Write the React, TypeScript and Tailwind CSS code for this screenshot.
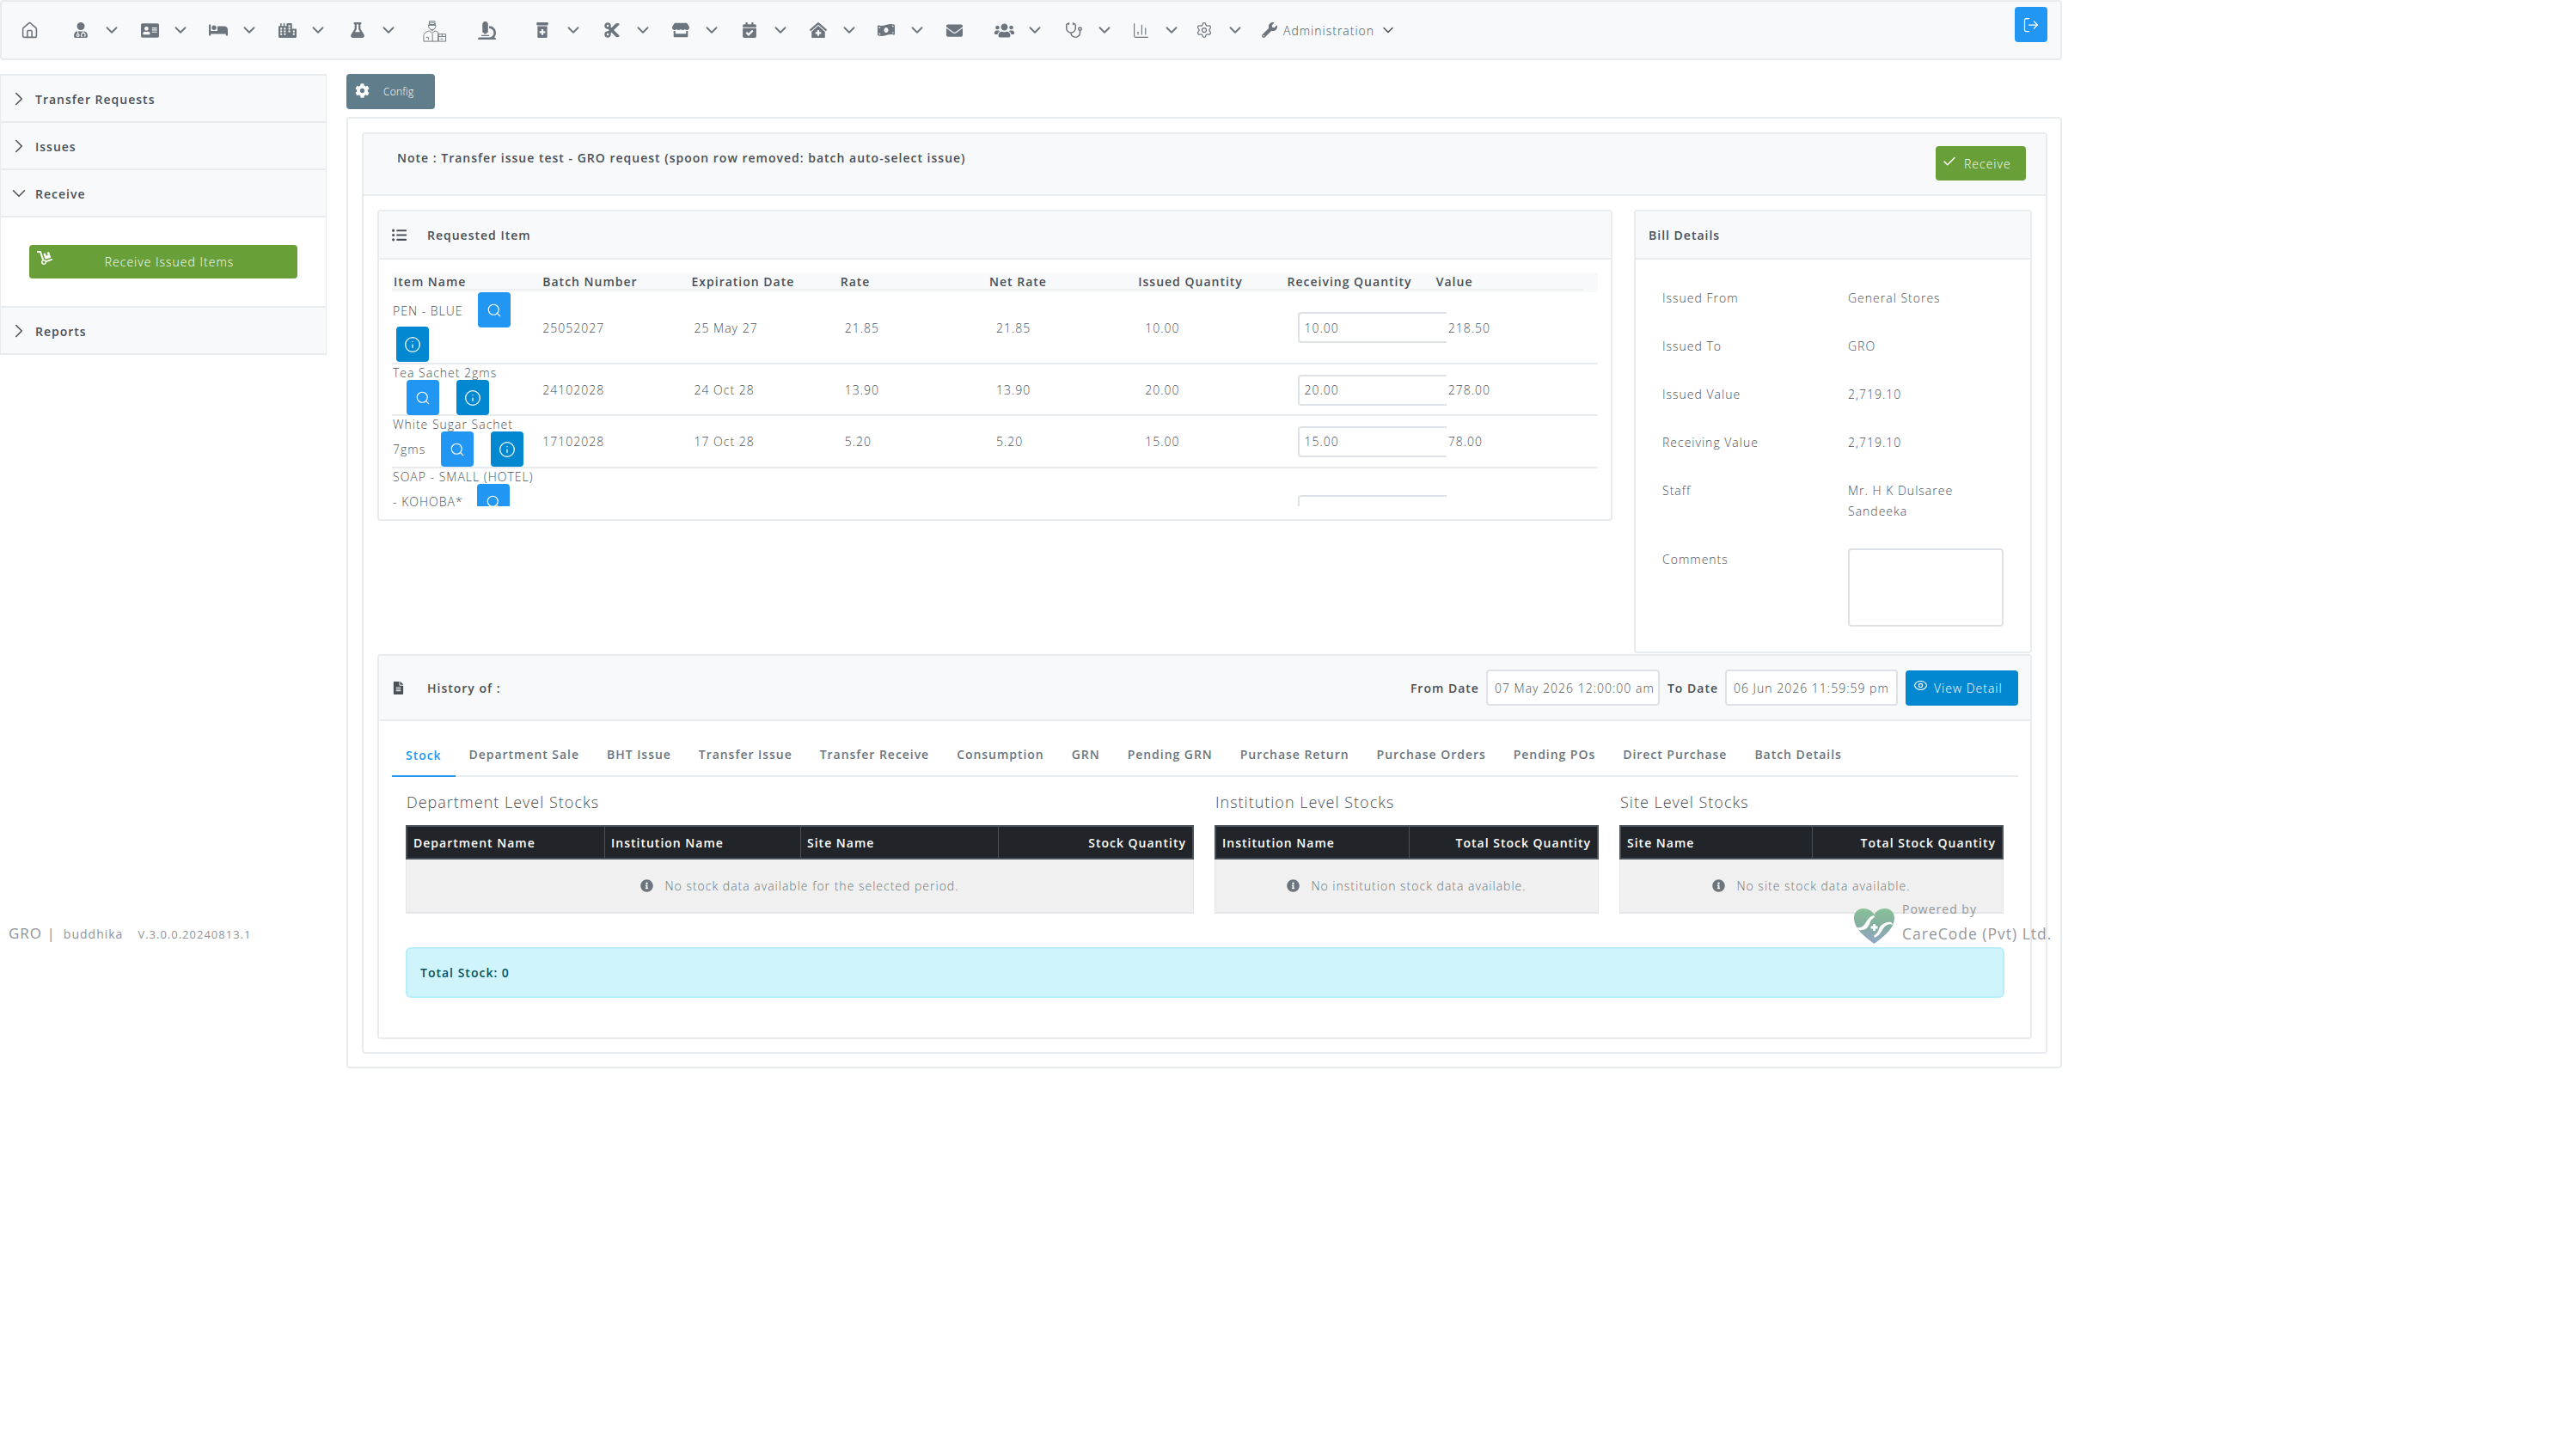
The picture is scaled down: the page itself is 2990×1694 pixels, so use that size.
import * as React from "react"
import { Check, ChevronDown, ChevronRight, Eye, Home, Info, LogOut, Search, Settings, ChartColumn, Stethoscope } from "lucide-react"
import {
  FaUserMd, FaAddressCard, FaBed, FaCity, FaFlask, FaMicroscope, FaPrescriptionBottleAlt, FaCut,
  FaStore, FaCalendarCheck, FaClinicMedical, FaMoneyBillWave, FaEnvelope, FaUsers, FaWrench, FaCog, FaDolly,
  FaListUl, FaFileAlt, FaInfoCircle,
} from "react-icons/fa"

function DoctorIcon() {
  return (
    <svg width="30" height="30" viewBox="0 0 30 30" fill="none" stroke="#6c757d" strokeWidth="1">
      <path d="M8 4h7v4H8z" />
      <circle cx="11.5" cy="10" r="4.5" />
      <path d="M7 9h9M9.5 14l2 2 2-2" />
      <path d="M1 29v-7c0-3 3-5 7-6l3.500 3 3.500-3c2 .5 3 1 4 2v11z" />
      <path d="M4 24h3v3M12 20v9" />
      <path d="M19.500 20h9v9h-9zM19.500 23h9M24 20v3M22 26h3" />
    </svg>
  )
}

function HeartLogo() {
  return (
    <svg width="47" height="41" viewBox="0 0 47 41">
      <defs>
        <linearGradient id="heartFade" x1="0" y1="0" x2="0" y2="1">
          <stop offset="0" stopColor="#84bf92" />
          <stop offset="0.5" stopColor="#7ea99c" />
          <stop offset="1" stopColor="#8ea3c4" />
        </linearGradient>
      </defs>
      <path d="M23.500 41C14 34 0 24 0 11 0 4 5 0 11 0c6 0 10 3 12.500 7C26 3 30 0 36 0c6 0 11 4 11 11 0 13-14 23-23.500 30z" fill="url(#heartFade)" />
      <path d="M1 21c6 3 10 0 13-5 2-4 5-7 9-8l1 2c-3 2-5 4-6 8-2 5-6 8-12 7z" fill="#fff" />
      <path d="M46 19c-6-2-10 1-13 6-2 4-5 7-9 9l-1-2c3-2 5-5 6-8 2-5 7-9 14-8z" fill="#fff" />
      <path d="M22 18h3v2.500h2.500v3H25V26h-3v-2.500h-2.500v-3H22z" fill="#fff" />
    </svg>
  )
}

const navItems = [
  { key: "home", icon: <Home size={21} strokeWidth={1.8} />, width: "w-[60px]", chevron: false },
  { key: "doctor", icon: <FaUserMd size={18} />, width: "w-[80px]", chevron: true },
  { key: "card", icon: <FaAddressCard size={21} />, width: "w-[80px]", chevron: true },
  { key: "bed", icon: <FaBed size={22} />, width: "w-[80px]", chevron: true },
  { key: "city", icon: <FaCity size={21} />, width: "w-[82px]", chevron: true },
  { key: "flask", icon: <FaFlask size={18} />, width: "w-[90px]", chevron: true },
  { key: "store-man", icon: <DoctorIcon />, width: "w-[60px]", chevron: false },
  { key: "microscope", icon: <FaMicroscope size={21} />, width: "w-[65px]", chevron: false },
  { key: "pill", icon: <FaPrescriptionBottleAlt size={18} />, width: "w-[81px]", chevron: true },
  { key: "cut", icon: <FaCut size={20} />, width: "w-[80px]", chevron: true },
  { key: "store", icon: <FaStore size={20} />, width: "w-[80px]", chevron: true },
  { key: "calendar", icon: <FaCalendarCheck size={18} />, width: "w-[80px]", chevron: true },
  { key: "clinic", icon: <FaClinicMedical size={20} />, width: "w-[79px]", chevron: true },
  { key: "money", icon: <FaMoneyBillWave size={20} />, width: "w-[79px]", chevron: true },
  { key: "mail", icon: <FaEnvelope size={19} />, width: "w-[58px]", chevron: false },
  { key: "users", icon: <FaUsers size={23} />, width: "w-[81px]", chevron: true },
  { key: "steth", icon: <Stethoscope size={21} strokeWidth={1.7} />, width: "w-[78px]", chevron: true },
  { key: "chart", icon: <ChartColumn size={21} strokeWidth={1.3} />, width: "w-[74px]", chevron: true },
  { key: "gear", icon: <Settings size={20} strokeWidth={1.5} />, width: "w-[76px]", chevron: true },
]

function Navbar() {
  return (
    <div className="relative flex h-[70px] w-[2399px] items-center rounded-[4px] border-2 border-[#e9ecef] bg-[#f8f9fa] pl-[18px] text-[#6c757d]">
      {navItems.map((item) => (
        <div key={item.key} className={`flex h-[30px] shrink-0 items-center ${item.width}`}>
          <span className="flex w-[28px] justify-center">{item.icon}</span>
          {item.chevron && <ChevronDown size={22} strokeWidth={2} className="ml-[11px]" />}
        </div>
      ))}
      <div className="flex items-center">
        <span className="flex w-[28px] justify-center"><FaWrench size={18} /></span>
        <span className="ml-[2px] text-[14px] font-light text-[#495057]">Administration</span>
        <ChevronDown size={20} strokeWidth={1.8} className="ml-[6px] text-[#495057]" />
      </div>
      <button className="absolute left-[2342px] top-[6px] flex h-[41px] w-[38px] items-center justify-center rounded-[4px] bg-[#2196f3] text-white">
        <LogOut size={20} strokeWidth={1.5} />
      </button>
    </div>
  )
}

function SideRow({ label, open }: { label: string; open?: boolean }) {
  return (
    <div className="flex h-[55px] items-center border-b-2 border-[#e9ecef] bg-[#f8f9fa] pl-[8px] text-[14px] font-semibold text-[#495057]">
      {open ? <ChevronDown size={26} strokeWidth={1.4} /> : <ChevronRight size={26} strokeWidth={1.4} />}
      <span className="ml-[6px] mt-[1px]">{label}</span>
    </div>
  )
}

function Sidebar() {
  return (
    <div className="w-[380px] shrink-0 self-start border-x border-t-2 border-[#e9ecef]">
      <SideRow label="Transfer Requests" />
      <SideRow label="Issues" />
      <SideRow label="Receive" open />
      <div className="flex h-[105px] items-center justify-center border-b-2 border-[#e9ecef] bg-white">
        <button className="relative flex h-[39px] w-[312px] items-center justify-center rounded-[4px] bg-[#689f38] pl-[14px] text-[14px] font-light text-white">
          <FaDolly size={18} className="absolute left-[9px] top-[6px]" />
          Receive Issued Items
        </button>
      </div>
      <SideRow label="Reports" />
    </div>
  )
}

const headers = ["Item Name", "Batch Number", "Expiration Date", "Rate", "Net Rate", "Issued Quantity", "Receiving Quantity", "Value"]

function SearchBtn() {
  return (
    <button className="flex h-[41px] w-[38px] shrink-0 items-center justify-center rounded-[4px] bg-[#2196f3] text-white">
      <Search size={18} strokeWidth={1.5} />
    </button>
  )
}

function InfoBtn() {
  return (
    <button className="flex h-[41px] w-[38px] shrink-0 items-center justify-center rounded-[4px] bg-[#0288d1] text-white">
      <Info size={20} strokeWidth={1.5} />
    </button>
  )
}

function Row({ height, item, batch, expiry, rate, issued, qty, value }: { height: string; item: React.ReactNode; batch?: string; expiry?: string; rate?: string; issued?: string; qty?: string; value?: string }) {
  return (
    <div className={`grid w-[1403px] grid-cols-[repeat(8,173.250px)] items-center border-b-2 border-[#e9ecef] ${height}`}>
      <div className="relative self-stretch">{item}</div>
      <div className="pl-[2px]">{batch}</div>
      <div className="pl-[5px]">{expiry}</div>
      <div className="pl-[7px]">{rate}</div>
      <div className="pl-[10px]">{rate}</div>
      <div className="pl-[10px]">{issued}</div>
      <div>
        <div className="ml-[14px] w-[173px] overflow-hidden">
          <div className="flex h-[36px] w-[200px] items-center rounded-[4px] border-2 border-[#dee2e6] bg-white pl-[6px]">{qty}</div>
        </div>
      </div>
      <div className="pl-[16px]">{value}</div>
    </div>
  )
}

function RequestedItems() {
  return (
    <div className="h-[362px] w-[1437px] shrink-0 rounded-[4px] border-2 border-[#e9ecef]">
      <div className="flex h-[56px] items-center border-b-2 border-[#e9ecef] bg-[#f8f9fa] pl-[15px] text-[14px] font-semibold">
        <FaListUl size={17} />
        <span className="ml-[24px]">Requested Item</span>
      </div>
      <div className="pl-[15px] pt-[15px] text-[14px] font-light">
        <div className="h-[23px] w-[1403px] bg-[#f8f9fa]">
          <div className="grid h-[21px] w-[1386px] grid-cols-[repeat(8,173.250px)] items-center border-b-2 border-[#eef0f2] font-semibold">
            {headers.map((h) => <div key={h} className="whitespace-nowrap pl-[2px]">{h}</div>)}
          </div>
        </div>
        <div className="h-[249px] overflow-hidden">
          <Row height="h-[84px]" batch="25052027" expiry="25 May 27" rate="21.85" issued="10.00" qty="10.00" value="218.50" item={
            <div className="flex flex-wrap items-center">
              <span className="ml-[1px] mt-[2px] w-[99px]">PEN - BLUE</span>
              <SearchBtn />
              <span className="ml-[5px] mt-[-1px]"><InfoBtn /></span>
            </div>
          } />
          <Row height="h-[60px]" batch="24102028" expiry="24 Oct 28" rate="13.90" issued="20.00" qty="20.00" value="278.00" item={
            <div className="pl-[1px]">
              <div className="h-[18px] whitespace-nowrap leading-[19px]">Tea Sachet 2gms</div>
              <div className="flex pl-[16px]">
                <SearchBtn />
                <span className="ml-[20px]"><InfoBtn /></span>
              </div>
            </div>
          } />
          <Row height="h-[61px]" batch="17102028" expiry="17 Oct 28" rate="5.20" issued="15.00" qty="15.00" value="78.00" item={
            <div className="pl-[1px]">
              <div className="h-[18px] whitespace-nowrap leading-[19px]">White Sugar Sachet</div>
              <div className="flex items-center">
                <span className="w-[56px]">7gms</span>
                <SearchBtn />
                <span className="ml-[20px]"><InfoBtn /></span>
              </div>
            </div>
          } />
          <Row height="h-[100px]" item={
            <div className="pl-[1px]">
              <div className="h-[18px] whitespace-nowrap leading-[19px]">SOAP - SMALL (HOTEL)</div>
              <div className="flex items-center">
                <span className="w-[98px]">- KOHOBA*</span>
                <SearchBtn />
              </div>
            </div>
          } />
        </div>
      </div>
    </div>
  )
}

const bill = [
  ["Issued From", "General Stores"],
  ["Issued To", "GRO"],
  ["Issued Value", "2,719.10"],
  ["Receiving Value", "2,719.10"],
]

function BillDetails() {
  return (
    <div className="h-[516px] w-[463px] shrink-0 rounded-[4px] border-2 border-[#e9ecef]">
      <div className="flex h-[56px] items-center border-b-2 border-[#e9ecef] bg-[#f8f9fa] pl-[15px] text-[14px] font-semibold">Bill Details</div>
      <div className="grid grid-cols-[216px_181px] gap-y-[32px] pl-[31px] pt-[33px] text-[14px] font-light leading-[24px]">
        {bill.map(([k, v]) => (
          <React.Fragment key={k}>
            <div>{k}</div>
            <div>{v}</div>
          </React.Fragment>
        ))}
        <div>Staff</div>
        <div>Mr. H K Dulsaree Sandeeka</div>
        <div>Comments</div>
        <div className="mt-[-1px] h-[91px] rounded-[4px] border-2 border-[#dee2e6] bg-white" />
      </div>
    </div>
  )
}

const tabs = ["Stock", "Department Sale", "BHT Issue", "Transfer Issue", "Transfer Receive", "Consumption", "GRN", "Pending GRN", "Purchase Return", "Purchase Orders", "Pending POs", "Direct Purchase", "Batch Details"]

function StockTable({ title, columns, width, empty }: { title: string; columns: { label: string; cls: string; right?: boolean }[]; width: string; empty: string }) {
  return (
    <div className={`shrink-0 ${width}`}>
      <div className="h-[40px] pl-[1px] text-[18px] font-light leading-[26px] text-[#495057]">{title}</div>
      <div className="flex h-[40px] border-2 border-[#495057] bg-[#212529] text-[14px] font-semibold text-white">
        {columns.map((c) => (
          <div key={c.label} className={`flex items-center border-r border-[#495057] px-[7px] last:border-r-0 ${c.cls} ${c.right ? "justify-end" : ""}`}>{c.label}</div>
        ))}
      </div>
      <div className="flex h-[63px] items-center justify-center gap-[13px] border-x border-b-2 border-[#e4e6e9] bg-[#f0f0f0] text-[14px] font-light text-[#6c757d]">
        <FaInfoCircle size={15} />
        <span>{empty}</span>
      </div>
    </div>
  )
}

function History() {
  return (
    <div className="h-[448px] w-[1925px] rounded-[4px] border-2 border-[#e9ecef]">
      <div className="flex h-[76px] items-center border-b-2 border-[#e9ecef] bg-[#f8f9fa] pl-[15px] text-[14px] font-semibold">
        <FaFileAlt size={15} />
        <span className="ml-[26px]">History of :</span>
        <span className="ml-auto">From Date</span>
        <div className="ml-[8px] flex h-[42px] w-[202px] items-center rounded-[4px] border-2 border-[#dee2e6] bg-white pl-[8px] font-light">07 May 2026 12:00:00 am</div>
        <span className="ml-[9px]">To Date</span>
        <div className="ml-[8px] flex h-[42px] w-[201px] items-center rounded-[4px] border-2 border-[#dee2e6] bg-white pl-[8px] font-light">06 Jun 2026 11:59:59 pm</div>
        <button className="ml-[9px] mr-[14px] flex h-[41px] w-[131px] items-center gap-[7px] rounded-[4px] bg-[#0288d1] pl-[9px] font-light text-white">
          <Eye size={17} strokeWidth={1.6} className="mt-[-6px]" />
          View Detail
        </button>
      </div>
      <div className="pl-[15px] pr-[14px]">
        <div className="flex h-[65px] items-end border-b-2 border-[#e9ecef] text-[14px] font-semibold tracking-[0.96px] text-[#6c757d]">
          {tabs.map((t, i) => (
            <div key={t} className={`flex h-[50px] items-center px-[16px] ${i === 0 ? "mb-[-2px] border-b-2 border-[#2196f3] text-[#2196f3]" : ""}`}>{t}</div>
          ))}
        </div>
        <div className="flex gap-[24px] pl-[16px] pt-[16px]">
          <StockTable
            title="Department Level Stocks"
            width="w-[917px]"
            empty="No stock data available for the selected period."
            columns={[
              { label: "Department Name", cls: "w-[230px]" },
              { label: "Institution Name", cls: "w-[228px]" },
              { label: "Site Name", cls: "w-[230px]" },
              { label: "Stock Quantity", cls: "flex-1", right: true },
            ]}
          />
          <StockTable
            title="Institution Level Stocks"
            width="w-[447px]"
            empty="No institution stock data available."
            columns={[
              { label: "Institution Name", cls: "w-[225px]" },
              { label: "Total Stock Quantity", cls: "flex-1", right: true },
            ]}
          />
          <StockTable
            title="Site Level Stocks"
            width="w-[447px]"
            empty="No site stock data available."
            columns={[
              { label: "Site Name", cls: "w-[223px]" },
              { label: "Total Stock Quantity", cls: "flex-1", right: true },
            ]}
          />
        </div>
        <div className="ml-[16px] mt-[39px] flex h-[59px] w-[1860px] items-center rounded-[6px] border-2 border-[#b6effb] bg-[#cff4fc] pl-[15px] text-[14px] font-semibold text-[#055160]">Total Stock: 0</div>
      </div>
    </div>
  )
}

export default function App() {
  return (
    <div className="relative h-[1694px] w-[2990px] overflow-hidden bg-white font-['Open_Sans',sans-serif] tracking-[1px] text-[#495057]">
      <Navbar />
      <div className="mt-[16px] flex">
        <Sidebar />
        <div className="ml-[23px] w-[1996px]">
          <button className="flex h-[41px] w-[103px] items-center rounded-[4px] bg-[#607d8b] pl-[10px] text-[12px] font-light tracking-[0.2px] text-white">
            <FaCog size={17} className="mt-[-3px]" />
            <span className="ml-[16px] mt-[1px]">Config</span>
          </button>
          <div className="mt-[9px] h-[1107px] rounded-[4px] border-2 border-[#e9ecef] pl-[16px] pr-[15px] pt-[16px]">
            <div className="h-[1072px] rounded-[4px] border-2 border-[#e9ecef]">
              <div className="flex h-[72px] items-start justify-between border-b-2 border-[#e9ecef] bg-[#f8f9fa] pl-[39px] pr-[23px] pt-[14px]">
                <span className="mt-[2px] text-[14px] font-semibold leading-[24px]">Note : Transfer issue test - GRO request (spoon row removed: batch auto-select issue)</span>
                <button className="flex h-[40px] w-[105px] items-center gap-[8px] rounded-[4px] bg-[#689f38] pl-[7px] text-[14px] font-light text-white">
                  <Check size={18} strokeWidth={2} className="mt-[-5px]" />
                  <span className="mt-[1px]">Receive</span>
                </button>
              </div>
              <div className="pl-[16px] pr-[16px] pt-[16px]">
                <div className="flex gap-[25px]">
                  <RequestedItems />
                  <BillDetails />
                </div>
                <div className="mt-[1px]"><History /></div>
              </div>
            </div>
          </div>
        </div>
      </div>
      <div className="absolute left-[10px] top-[1073px] flex items-baseline whitespace-nowrap font-normal text-[#8f9398]">
        <span className="text-[17px]">GRO | </span>
        <span className="ml-[9px] text-[14px]">buddhika</span>
        <span className="ml-[17px] text-[13px]">V.3.0.0.20240813.1</span>
      </div>
      <div className="absolute left-[2157px] top-[1048px] flex whitespace-nowrap text-[#8f9398] opacity-95">
        <div className="mt-[9px]"><HeartLogo /></div>
        <div className="ml-[9px]">
          <div className="h-[20px] text-[14px] leading-[20px]">Powered by</div>
          <div className="mt-[6px] text-[17.500px] leading-[24px]">CareCode (Pvt) Ltd.</div>
        </div>
      </div>
    </div>
  )
}
